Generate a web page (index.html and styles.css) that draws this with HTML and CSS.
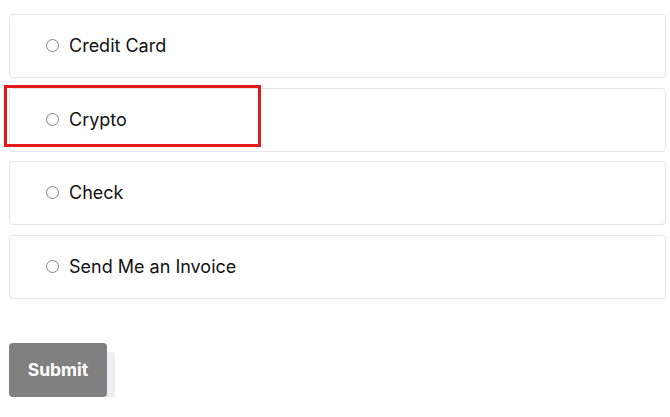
FILE: index.html
```html
<!DOCTYPE html>
<html>
<head>
<meta charset="utf-8">
<link rel="stylesheet" href="styles.css">
</head>
<body>
<div class="page">
  <div class="options">
    <label class="option"><span class="radio"></span><span class="label">Credit Card</span></label>
    <label class="option"><span class="radio"></span><span class="label">Crypto</span></label>
    <label class="option"><span class="radio"></span><span class="label">Check</span></label>
    <label class="option"><span class="radio"></span><span class="label">Send Me an Invoice</span></label>
    <div class="highlight"></div>
  </div>
  <div class="actions">
    <div class="submit-shadow"></div>
    <button class="submit">Submit</button>
  </div>
</div>
</body>
</html>
```
FILE: styles.css
```css
html, body {
  margin: 0;
  padding: 0;
  background: #ffffff;
  font-family: Inter, "Liberation Sans", sans-serif;
}
.page {
  padding: 14px 4px 0 9px;
}
.options {
  position: relative;
  display: flex;
  flex-direction: column;
  gap: 9.67px;
}
.option {
  display: flex;
  align-items: center;
  height: 64px;
  box-sizing: border-box;
  border: 1px solid #e5e5e7;
  border-radius: 4px;
  padding-left: 36px;
  padding-bottom: 1px;
}
.radio {
  width: 13px;
  height: 13px;
  box-sizing: border-box;
  border: 1.3px solid #858585;
  border-radius: 50%;
  margin-right: 10px;
}
.label {
  font-size: 18px;
  color: #111111;
}
.highlight {
  position: absolute;
  left: -5px;
  top: 71px;
  width: 257px;
  height: 62px;
  box-sizing: border-box;
  border: 3px solid #e4191c;
}
.actions {
  position: relative;
  margin-top: 44px;
}
.submit-shadow {
  position: absolute;
  left: 33px;
  top: 9px;
  width: 73px;
  height: 54px;
  background: #eceef1;
  border-radius: 3px;
}
.submit {
  position: relative;
  display: block;
  width: 98px;
  height: 54px;
  border: none;
  border-radius: 4px;
  background: #808080;
  color: #ffffff;
  font-family: Inter, "Liberation Sans", sans-serif;
  font-weight: 700;
  font-size: 17.5px;
  padding: 0;
}
```
